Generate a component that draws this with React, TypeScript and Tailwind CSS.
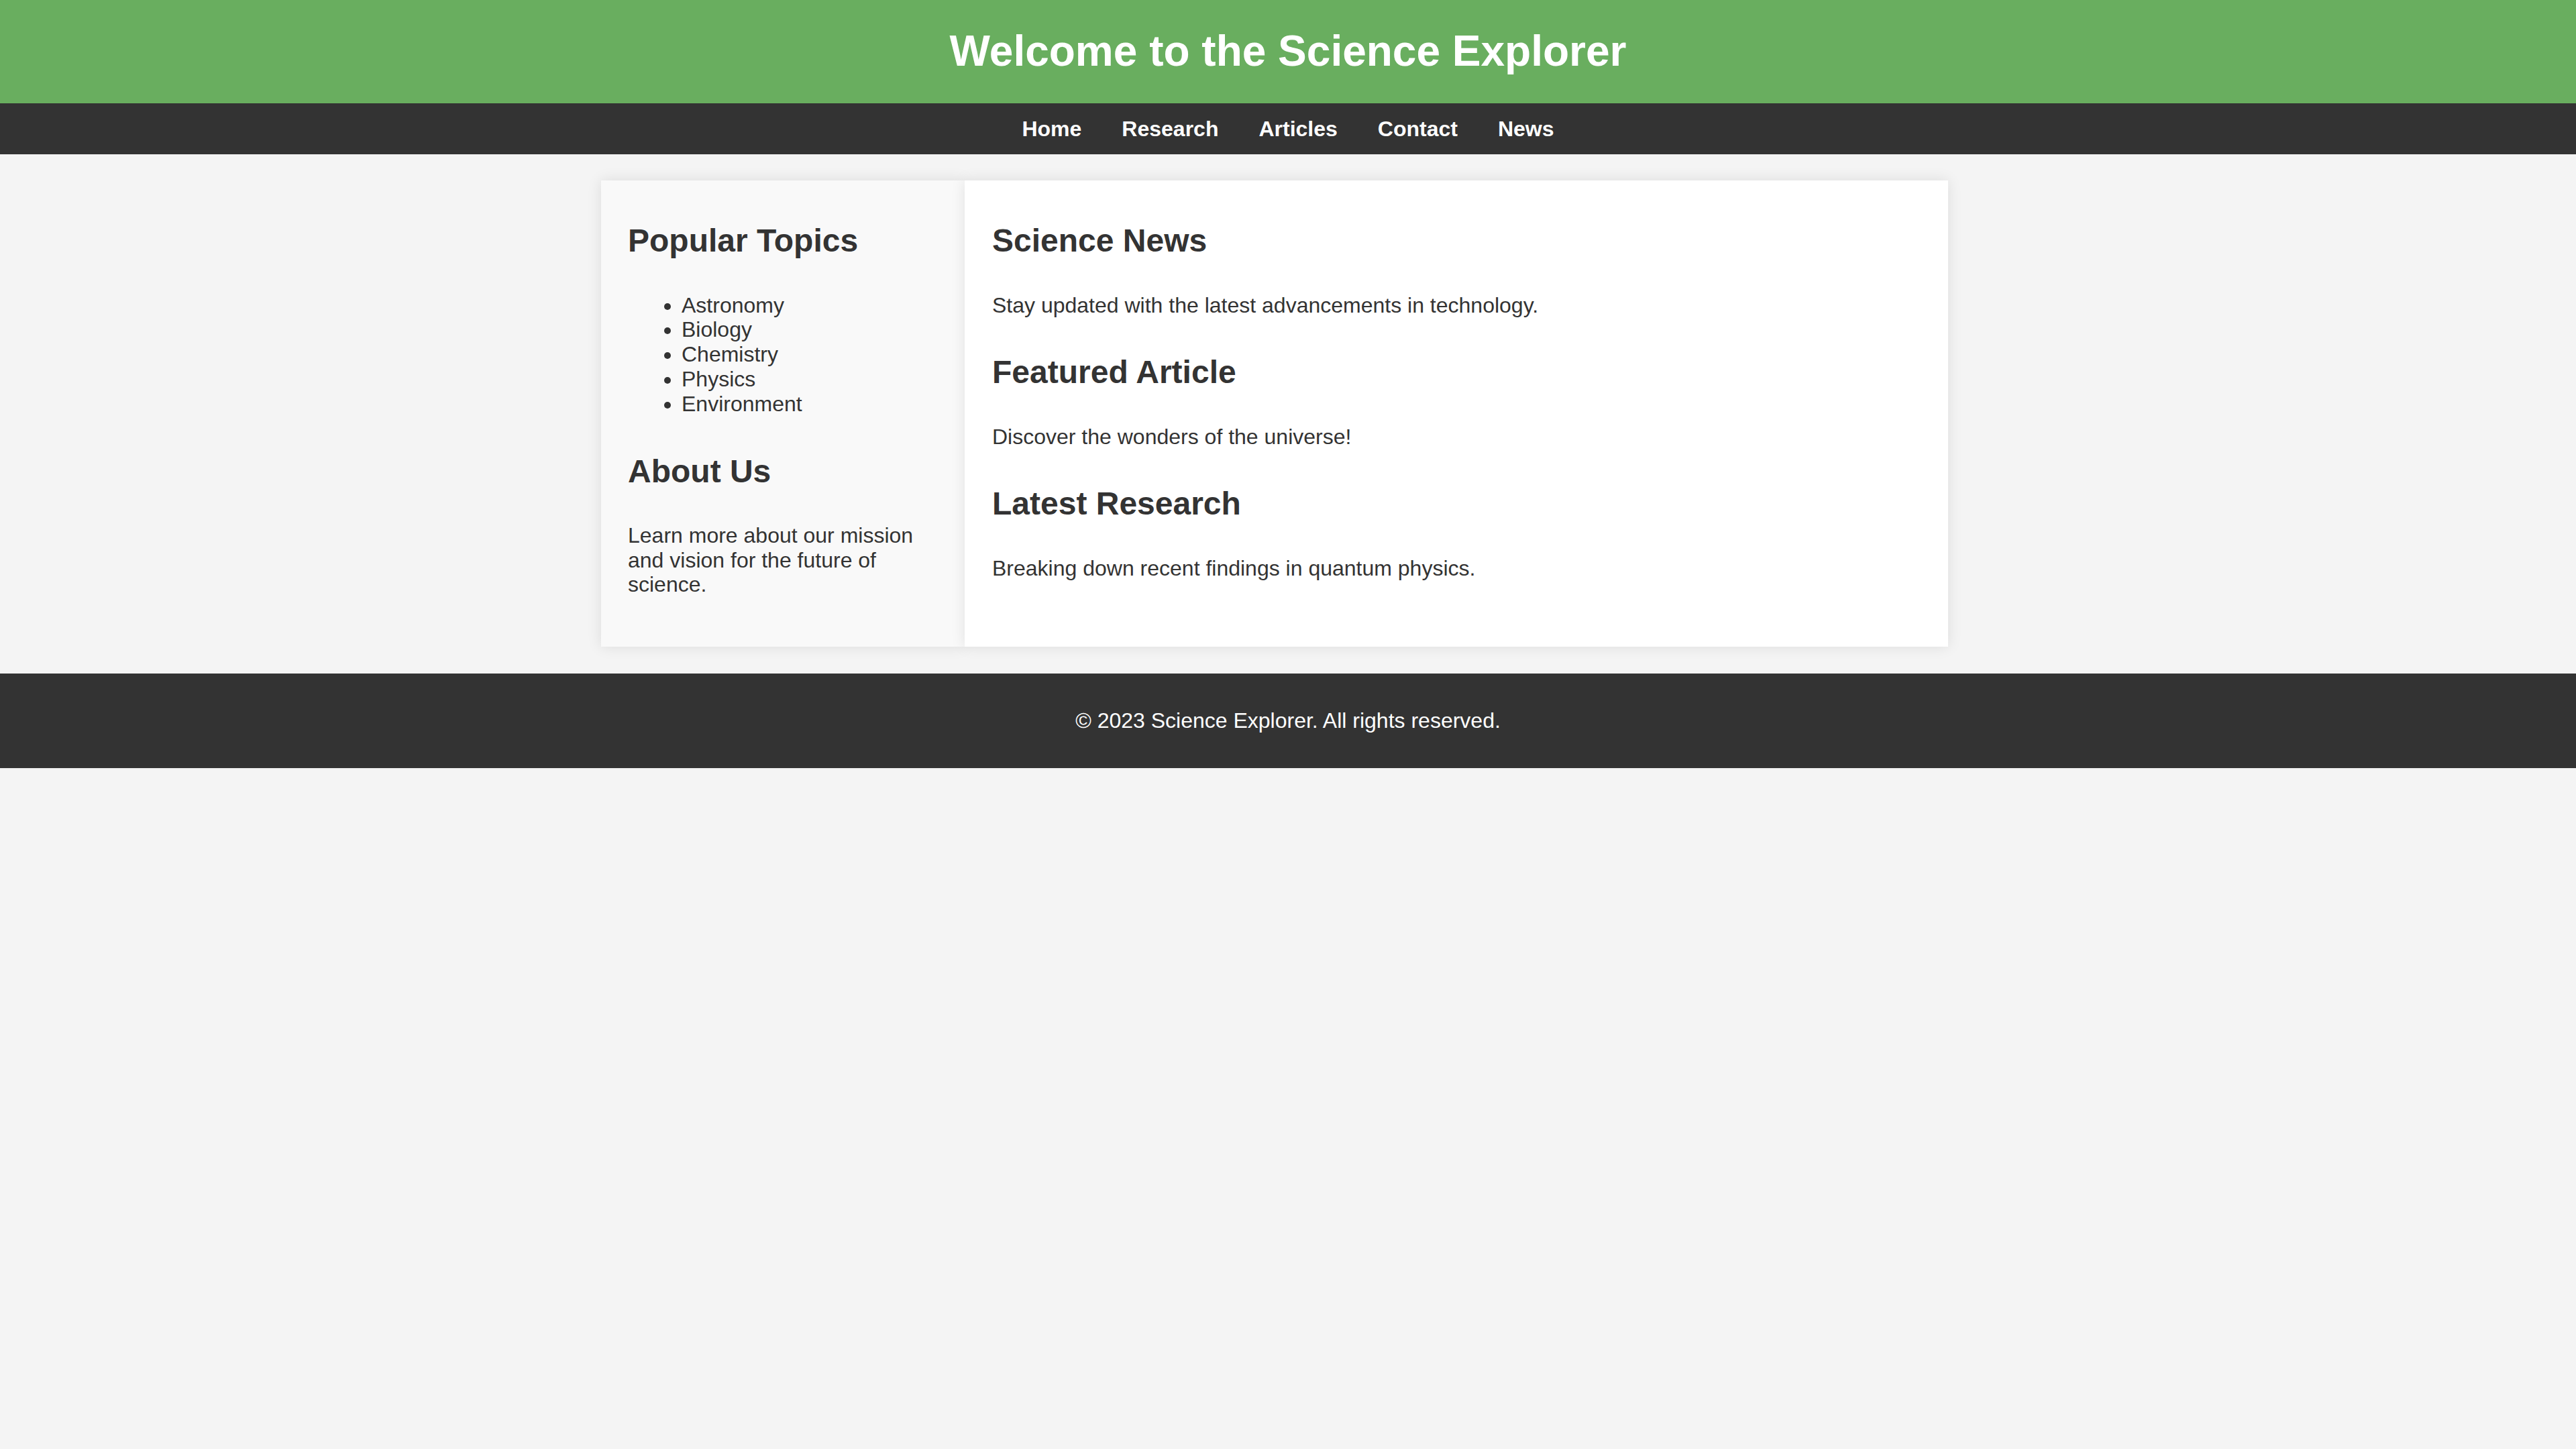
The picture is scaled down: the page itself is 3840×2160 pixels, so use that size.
import React from "react";

export default function App() {
  const topics = ["Astronomy", "Biology", "Chemistry", "Physics", "Environment"];
  const links = ["Home", "Research", "Articles", "Contact", "News"];
  return (
    <div className="min-h-screen bg-[#f4f4f4] font-['Liberation_Sans',Arial,sans-serif] text-[#333] leading-[1.15]">
      <header className="bg-[#69ae5f] py-[40px] text-center">
        <h1 className="text-[64px] font-bold leading-[1.15] text-white">Welcome to the Science Explorer</h1>
      </header>
      <nav className="bg-[#333] py-[20px] flex justify-center gap-[60px]">
        {links.map((l) => (
          <a key={l} href="#" className="text-[32px] font-bold leading-[1.15] text-white no-underline">
            {l}
          </a>
        ))}
      </nav>
      <div className="w-[2048px] mx-auto mt-[39px] mb-[40px] flex">
        <aside className="w-[542px] bg-[#f9f9f9] px-[40px] pt-[62px] pb-[74px] shadow-[0_0_20px_rgba(0,0,0,0.1)]">
          <h2 className="text-[48px] font-bold leading-[1.15] mb-[50px]">Popular Topics</h2>
          <ul className="list-disc pl-[80px] text-[32px] leading-[1.15] mb-[54px]">
            {topics.map((t) => (
              <li key={t}>{t}</li>
            ))}
          </ul>
          <h2 className="text-[48px] font-bold leading-[1.15] mb-[50px]">About Us</h2>
          <p className="text-[32px] leading-[1.15]">Learn more about our mission and vision for the future of science.</p>
        </aside>
        <main className="w-[1466px] bg-white px-[41px] pt-[62px] pb-[74px] shadow-[0_0_20px_rgba(0,0,0,0.1)]">
          <h2 className="text-[48px] font-bold leading-[1.15] mb-[50px]">Science News</h2>
          <p className="text-[32px] leading-[1.15] mb-[54px]">Stay updated with the latest advancements in technology.</p>
          <h2 className="text-[48px] font-bold leading-[1.15] mb-[50px]">Featured Article</h2>
          <p className="text-[32px] leading-[1.15] mb-[54px]">Discover the wonders of the universe!</p>
          <h2 className="text-[48px] font-bold leading-[1.15] mb-[50px]">Latest Research</h2>
          <p className="text-[32px] leading-[1.15]">Breaking down recent findings in quantum physics.</p>
        </main>
      </div>
      <footer className="bg-[#333] py-[52px] text-center">
        <p className="text-[32px] leading-[1.15] text-white">© 2023 Science Explorer. All rights reserved.</p>
      </footer>
    </div>
  );
}
